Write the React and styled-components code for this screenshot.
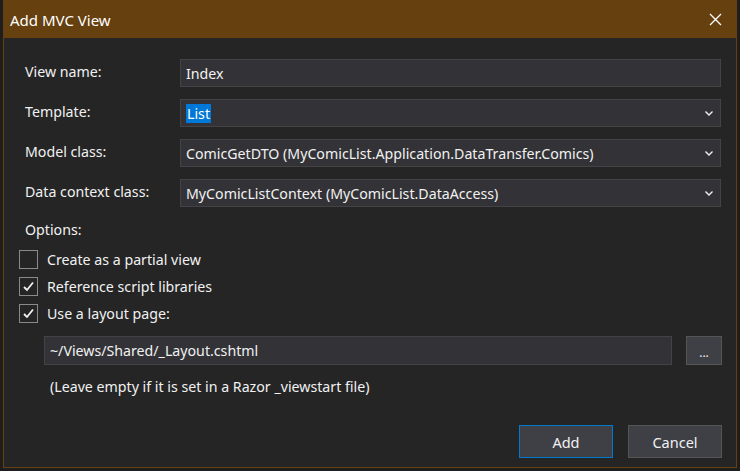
import React from "react";
import styled, { createGlobalStyle } from "styled-components";

const GlobalStyle = createGlobalStyle`
	html, body {
		margin: 0;
		padding: 0;
		background: #1e1e1e;
		font-family: "Noto Sans", "Open Sans", sans-serif;
	}
`;

const Dialog = styled.div`
	width: 734px;
	height: 468px;
	margin-left: 3px;
	box-sizing: border-box;
	border: 1px solid #66400f;
	background: #252526;
	color: #f1f1f1;
	display: flex;
	flex-direction: column;
`;

const TitleBar = styled.div`
	height: 37px;
	background: #66400f;
	display: flex;
	align-items: center;
	justify-content: space-between;
	padding: 0 14px 0 6px;
	font-size: 15px;
	color: #ffffff;
`;

const CloseButton = styled.button`
	background: none;
	border: none;
	padding: 0;
	width: 14px;
	height: 14px;
	display: flex;
	align-items: center;
	justify-content: center;
	cursor: pointer;
`;

const Body = styled.div`
	flex: 1;
	display: flex;
	flex-direction: column;
	padding: 21px 14px 8px 21px;
	font-size: 14.2px;
`;

const FieldRow = styled.div`
	display: grid;
	grid-template-columns: 155px 541px;
	align-items: center;
	height: 28px;
	margin-bottom: 12px;
`;

const Label = styled.label`
	color: #f1f1f1;
	margin-top: -4px;
`;

const Field = styled.div`
	height: 28px;
	box-sizing: border-box;
	background: #333337;
	border: 1px solid #434346;
	display: flex;
	align-items: center;
	justify-content: space-between;
	padding: 0 6px 0 5px;
	color: #f1f1f1;
`;

const Selected = styled.span`
	background: #0078d7;
	color: #ffffff;
	padding: 0 1px;
`;

const Section = styled.div`
	margin: 1px 0 11px;
`;

const CheckRow = styled.div`
	display: flex;
	align-items: center;
	gap: 9px;
	height: 19px;
	margin-left: -6px;
	margin-bottom: 8px;
`;

const Box = styled.span`
	width: 19px;
	height: 19px;
	box-sizing: border-box;
	border: 1px solid #8a8a8a;
	background: #252526;
	display: flex;
	align-items: center;
	justify-content: center;
`;

const PathRow = styled.div`
	display: flex;
	gap: 14px;
	margin: 5px 0 0 19px;
`;

const PathField = styled(Field)`
	width: 628px;
	height: 29px;
`;

const BrowseButton = styled.button`
	width: 36px;
	height: 29px;
	box-sizing: border-box;
	background: #3f3f46;
	border: 1px solid #555555;
	color: #f1f1f1;
	font-size: 12px;
	padding: 4px 0 0;
	font-family: inherit;
`;

const Hint = styled.div`
	margin: 12px 0 0 25px;
`;

const Footer = styled.div`
	margin-top: auto;
	display: flex;
	justify-content: flex-end;
	gap: 15px;
	padding-bottom: 1px;
`;

const Button = styled.button`
	width: 94px;
	height: 33px;
	box-sizing: border-box;
	background: #3f3f46;
	border: 1px solid ${(p) => (p.$primary ? "#007acc" : "#555555")};
	color: #f1f1f1;
	font-size: 14.5px;
	font-family: inherit;
`;

const Chevron = () => (
	<svg width="10" height="10" viewBox="0 0 10 10">
		<path d="M1.5 3.5 L5 7 L8.5 3.5" fill="none" stroke="#f1f1f1" strokeWidth="1.4" />
	</svg>
);

const Check = () => (
	<svg width="13" height="13" viewBox="0 0 13 13">
		<path d="M2 7 L5 10 L11 2.5" fill="none" stroke="#f1f1f1" strokeWidth="1.8" />
	</svg>
);

const fields = [
	{ label: "View name:", value: "Index" },
	{ label: "Template:", value: "List", select: true, selected: true },
	{ label: "Model class:", value: "ComicGetDTO (MyComicList.Application.DataTransfer.Comics)", select: true },
	{ label: "Data context class:", value: "MyComicListContext (MyComicList.DataAccess)", select: true },
];

const options = [
	{ text: "Create as a partial view", checked: false },
	{ text: "Reference script libraries", checked: true },
	{ text: "Use a layout page:", checked: true },
];

const App = () => (
	<>
		<GlobalStyle />
		<Dialog>
			<TitleBar>
				<span>Add MVC View</span>
				<CloseButton aria-label="Close">
					<svg width="13" height="13" viewBox="0 0 13 13">
						<path d="M1 1 L12 12 M12 1 L1 12" stroke="#ffffff" strokeWidth="1.3" />
					</svg>
				</CloseButton>
			</TitleBar>
			<Body>
				{fields.map((f) => (
					<FieldRow key={f.label}>
						<Label>{f.label}</Label>
						<Field>
							<span>{f.selected ? <Selected>{f.value}</Selected> : f.value}</span>
							{f.select && <Chevron />}
						</Field>
					</FieldRow>
				))}
				<Section>Options:</Section>
				{options.map((o) => (
					<CheckRow key={o.text}>
						<Box>{o.checked && <Check />}</Box>
						<span>{o.text}</span>
					</CheckRow>
				))}
				<PathRow>
					<PathField>~/Views/Shared/_Layout.cshtml</PathField>
					<BrowseButton>...</BrowseButton>
				</PathRow>
				<Hint>(Leave empty if it is set in a Razor _viewstart file)</Hint>
				<Footer>
					<Button $primary>Add</Button>
					<Button>Cancel</Button>
				</Footer>
			</Body>
		</Dialog>
	</>
);

export default App;
